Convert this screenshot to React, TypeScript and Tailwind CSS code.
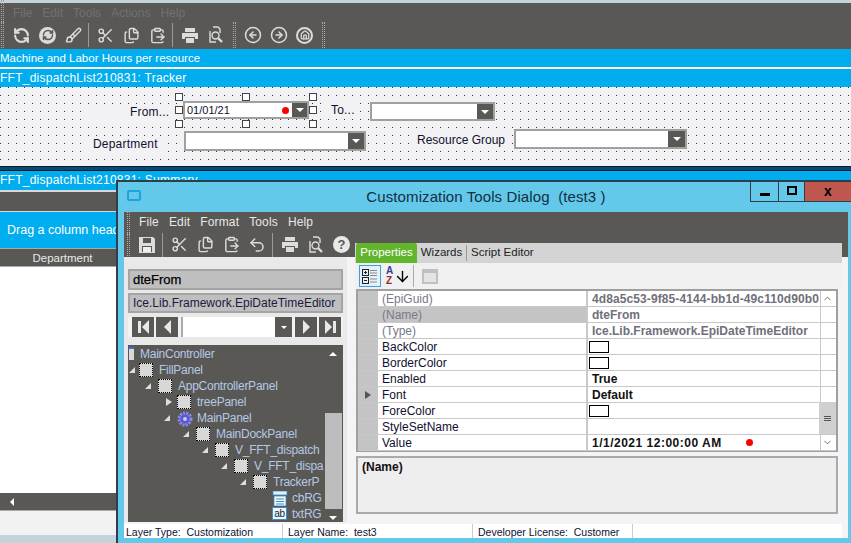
import {
  ArrowDown,
  Brush,
  ChevronDown,
  ChevronUp,
  CircleArrowLeft,
  CircleArrowRight,
  ClipboardPaste,
  Files,
  House,
  RefreshCcw,
  RefreshCw,
  Scissors,
  Undo2,
} from "lucide-react";

const sans = "font-['Liberation_Sans',Arial,sans-serif]";

function Grip() {
  return <div className="h-[26px] w-[3px] border-x border-dotted border-[#aaa]" />;
}

function Sep() {
  return <div className="h-[24px] w-px bg-[#9a9a98]" />;
}

function PrintIcon() {
  return (
    <svg width="18" height="17" viewBox="0 0 18 17" fill="#dcdcdc">
      <rect x="4" y="1" width="10" height="4" />
      <path d="M1 6h16v6h-3v-2H4v2H1z" />
      <rect x="5" y="11" width="8" height="5" />
    </svg>
  );
}

function PreviewIcon() {
  return (
    <svg width="17" height="18" viewBox="0 0 17 18" fill="none" stroke="#dcdcdc" strokeWidth="1.4">
      <path d="M6 1h5l2 2v4M3 5v11h6" />
      <circle cx="8.5" cy="9.5" r="3.5" />
      <path d="M11 12l4 4" strokeWidth="2.4" />
    </svg>
  );
}

function SaveIcon() {
  return (
    <svg width="18" height="18" viewBox="0 0 18 18" fill="#dcdcdc">
      <path d="M1 1h14l2 2v14H1z" />
      <rect x="5" y="2" width="8" height="5" fill="#595855" />
      <rect x="4" y="10" width="10" height="6" fill="#595855" />
      <rect x="5" y="11" width="8" height="5" fill="#efefef" />
    </svg>
  );
}

function CategorizedIcon() {
  return (
    <svg width="16" height="16" viewBox="0 0 16 16" fill="none" stroke="#222">
      <rect x="0.5" y="1.5" width="6" height="6" />
      <path d="M2 4.5h3M3.5 3v3" />
      <rect x="0.5" y="9.5" width="6" height="6" />
      <path d="M2 12.5h3" />
      <path d="M8 2.5h7M8 5h7M8 7.5h7M8 11h7M8 14h7" stroke="#8a8a8a" />
    </svg>
  );
}

function TriangleDown() {
  return <div className="h-0 w-0 border-x-[4px] border-t-[4px] border-x-transparent border-t-white" />;
}

function Combo({ className, button }: { className: string; button: string }) {
  return (
    <div className={`absolute flex justify-end border-2 border-[#a0a0a0] bg-white ${className}`}>
      <div className={`flex h-full items-center justify-center bg-[#595855] ${button}`}>
        <TriangleDown />
      </div>
    </div>
  );
}

function Handle({ className }: { className: string }) {
  return <div className={`absolute h-[8px] w-[8px] border border-[#444] bg-white ${className}`} />;
}

function Label({ className, children }: { className: string; children: string }) {
  return (
    <div className={`absolute whitespace-nowrap bg-[#f2f2f5] px-1 text-[12px] leading-[16px] text-[#101030] ${className}`}>
      {children}
    </div>
  );
}

const propRows = [
  { name: "(EpiGuid)", value: "4d8a5c53-9f85-4144-bb1d-49c110d90b0", dim: true, wide: "tracking-[0.1px]" },
  { name: "(Name)", value: "dteFrom", dim: true, selected: true },
  { name: "(Type)", value: "Ice.Lib.Framework.EpiDateTimeEditor", dim: true },
  { name: "BackColor", swatch: true },
  { name: "BorderColor", swatch: true },
  { name: "Enabled", value: "True" },
  { name: "Font", value: "Default", expand: true },
  { name: "ForeColor", swatch: true },
  { name: "StyleSetName", value: "" },
  { name: "Value", value: "1/1/2021 12:00:00 AM", dot: true, wide: "tracking-[0.5px]" },
];

const treeRows = [
  { label: "MainController", left: 1, text: 140, kind: "doc" },
  { label: "FillPanel", left: 139, text: 159, kind: "panel", arrow: 129 },
  { label: "AppControllerPanel", left: 158, text: 178, kind: "panel", arrow: 145 },
  { label: "treePanel", left: 177, text: 197, kind: "panel", arrow: 164, closed: true },
  { label: "MainPanel", left: 177, text: 197, kind: "gear", arrow: 164 },
  { label: "MainDockPanel", left: 196, text: 216, kind: "panel", arrow: 183 },
  { label: "V_FFT_dispatch", left: 215, text: 235, kind: "panel", arrow: 202 },
  { label: "V_FFT_dispa", left: 234, text: 254, kind: "panel", arrow: 221 },
  { label: "TrackerP", left: 253, text: 273, kind: "panel", arrow: 240 },
  { label: "cbRG", left: 272, text: 292, kind: "combo" },
  { label: "txtRG", left: 272, text: 292, kind: "ab" },
];

function TreeIcon({ kind }: { kind: string }) {
  if (kind === "panel") {
    return <div className="h-[14px] w-[14px] border border-dotted border-black bg-[#d8d8d8]" />;
  }
  if (kind === "gear") {
    return (
      <svg width="16" height="16" viewBox="0 0 16 16">
        <circle cx="8" cy="8" r="6" fill="#5a5ad0" stroke="#8a8ae8" strokeWidth="3" strokeDasharray="2 1.2" />
        <circle cx="8" cy="8" r="2" fill="#c8c8f0" />
      </svg>
    );
  }
  if (kind === "combo") {
    return (
      <svg width="16" height="15" viewBox="0 0 16 15">
        <rect x="1" y="0" width="14" height="4" fill="#dff1fb" stroke="#3b8fc4" strokeWidth="0.8" />
        <rect x="2" y="5" width="12" height="10" fill="#f4f8fb" stroke="#3b8fc4" strokeWidth="0.8" />
        <path d="M4 8h8M4 10.5h8M4 13h8" stroke="#3b8fc4" />
      </svg>
    );
  }
  if (kind === "ab") {
    return (
      <div className="flex h-[13px] w-[15px] items-center justify-center border border-[#3b8fc4] bg-[#eef6fb] text-[10px] leading-none text-[#123]">
        ab
      </div>
    );
  }
  return <div className="h-[13px] w-[5px] border-t-2 border-[#3c6ee0] bg-[#d8d8d8]" />;
}

function TreeRow({ row }: { row: (typeof treeRows)[number] }) {
  return (
    <div className="relative h-[16px] text-[12px] leading-[16px] tracking-[-0.25px] text-[#b4c8e6]">
      {row.arrow !== undefined &&
        (row.closed ? (
          <div
            className="absolute top-[4px] h-0 w-0 border-y-[4px] border-l-[6px] border-y-transparent border-l-[#ddd]"
            style={{ left: row.arrow - 128 + 2 }}
          />
        ) : (
          <div
            className="absolute top-[5px] h-0 w-0 border-b-[6px] border-l-[6px] border-b-[#ddd] border-l-transparent"
            style={{ left: row.arrow - 128 }}
          />
        ))}
      <div className="absolute top-px" style={{ left: row.kind === "doc" ? row.left : row.left - 128 }}>
        <TreeIcon kind={row.kind} />
      </div>
      <div className="absolute whitespace-nowrap" style={{ left: row.text - 128 }}>
        {row.label}
      </div>
    </div>
  );
}

function NavButton({ children }: { children: React.ReactNode }) {
  return <div className="flex h-[20px] w-[22px] items-center justify-center gap-px bg-[#595855]">{children}</div>;
}

function Bar() {
  return <div className="h-[12px] w-[3px] bg-[#e8e8e8]" />;
}

function Tri({ left }: { left?: boolean }) {
  return left ? (
    <div className="h-0 w-0 border-y-[7px] border-r-[7px] border-y-transparent border-r-[#e8e8e8]" />
  ) : (
    <div className="h-0 w-0 border-y-[7px] border-l-[7px] border-y-transparent border-l-[#e8e8e8]" />
  );
}

function PropertyGrid() {
  return (
    <div className="relative ml-px h-[163px] w-[482px] border-2 border-[#a0a0a0] bg-white text-[12px] leading-[17px]">
      {propRows.map((row) => (
        <div key={row.name} className="flex h-[16px] border-b border-[#c8c8c8]">
          <div className="flex w-[20px] shrink-0 items-center justify-center bg-[#c4c4c4]">
            {row.expand && (
              <div className="h-0 w-0 border-y-[4px] border-l-[6px] border-y-transparent border-l-[#555]" />
            )}
          </div>
          <div
            className={`w-[210px] shrink-0 border-r-2 border-[#c8c8c8] pl-1 ${row.selected ? "bg-[#c4c4c4]" : ""} ${
              row.dim ? "text-[#7a7a8a]" : "text-[#101030]"
            }`}
          >
            {row.name}
          </div>
          <div
            className={`relative w-[233px] shrink-0 overflow-hidden whitespace-nowrap border-r border-[#c8c8c8] pl-[4px] font-bold ${
              row.dim ? "text-[#70707a]" : "text-[#111]"
            } ${row.wide ?? ""}`}
          >
            {row.swatch && <div className="-ml-[3px] mt-[2px] h-[12px] w-[20px] border border-black bg-white" />}
            {row.value}
            {row.dot && <div className="absolute left-[158px] top-[4px] h-[7px] w-[7px] rounded-full bg-[#f00]" />}
          </div>
        </div>
      ))}
      <div className="absolute right-0 top-0 flex h-[159px] w-[17px] flex-col justify-between">
        <div className="flex h-[16px] items-center justify-center border-b border-[#c8c8c8] text-[#666]">
          <ChevronUp size={11} />
        </div>
        <div>
          <div className="flex h-[32px] flex-col items-center justify-center gap-px bg-[#d0d0d0]">
            <div className="h-px w-[7px] bg-[#555]" />
            <div className="h-px w-[7px] bg-[#555]" />
            <div className="h-px w-[7px] bg-[#555]" />
          </div>
          <div className="flex h-[16px] items-center justify-center text-[#666]">
            <ChevronDown size={11} />
          </div>
        </div>
      </div>
    </div>
  );
}

function Dialog() {
  return (
    <div className={`absolute left-[116px] top-[180px] h-[363px] w-[735px] border-l-2 border-t-2 border-[#2c3f4a] bg-[#63c8ea] ${sans}`}>
      <div className="relative flex h-[30px] items-center justify-center pl-[3px] text-[15px] tracking-[0.1px] text-[#10303f]">
        <div className="absolute left-[9px] top-[8px] h-[11px] w-[14px] rounded-[2px] border-2 border-[#1aa5dc] bg-[#63c8ea]" />
        <span className="whitespace-pre">Customization Tools Dialog  (test3 )</span>
        <div className="absolute right-0 top-0 flex h-[20px] border-b border-l border-[#2c3f4a]">
          <div className="flex w-[28px] items-end justify-center border-r border-[#2c3f4a] pb-[5px]">
            <div className="h-[3px] w-[10px] bg-black" />
          </div>
          <div className="flex w-[26px] items-center justify-center border-r border-[#2c3f4a] pb-[2px]">
            <div className="h-[9px] w-[10px] border-2 border-black" />
          </div>
          <div className="flex w-[46px] items-center justify-center bg-[#c0574f] pb-[2px] text-[14px] font-bold leading-none text-black">
            x
          </div>
        </div>
      </div>
      <div className="ml-[6px] w-[724px] bg-[#f4f4f6]">
        <div className="h-[45px] bg-[#595855] text-[#e8e8e8]">
          <div className="flex h-[20px] items-center pl-[3px] text-[12px] tracking-[0.15px]">
            <Grip />
            <div className="ml-[9px] flex gap-[10px]">
              <span>File</span>
              <span>Edit</span>
              <span>Format</span>
              <span>Tools</span>
              <span>Help</span>
            </div>
          </div>
          <div className="flex h-[25px] items-center pl-[3px] text-[#dcdcdc]">
            <Grip />
            <div className="ml-[8px]">
              <SaveIcon />
            </div>
            <div className="ml-[6px]">
              <Sep />
            </div>
            <Scissors size={17} className="ml-[8px]" />
            <Files size={17} className="ml-[9px]" />
            <ClipboardPaste size={17} className="ml-[9px]" />
            <Undo2 size={18} className="ml-[8px]" />
            <div className="ml-[6px]">
              <Sep />
            </div>
            <div className="ml-[8px]">
              <PrintIcon />
            </div>
            <div className="ml-[8px]">
              <PreviewIcon />
            </div>
            <div className="ml-[9px] flex h-[17px] w-[17px] items-center justify-center rounded-full bg-[#e8e8e8] text-[13px] font-bold text-[#595855]">
              ?
            </div>
          </div>
        </div>
        <div className="flex h-[267px]">
          <div className="h-[265px] w-[223px] rounded-tr-[3px] bg-[#e9e9e9] px-[4px] pt-[12px]">
            <div className="flex h-[21px] items-center border-2 border-[#a4a4a4] bg-[#bfbfbf] pl-[3px] text-[13px] text-black [-webkit-text-stroke:0.25px_black]">
              dteFrom
            </div>
            <div className="mt-[3px] flex h-[20px] items-center border-2 border-[#a4a4a4] bg-[#bfbfbf] pl-[3px] text-[12px] text-[#201a40]">
              Ice.Lib.Framework.EpiDateTimeEditor
            </div>
            <div className="mt-[4px] flex h-[20px] items-center bg-[#f2f2f2] pl-[4px]">
              <NavButton>
                <Bar />
                <Tri left />
              </NavButton>
              <div className="ml-[2px]">
                <NavButton>
                  <Tri left />
                </NavButton>
              </div>
              <div className="ml-[3px] flex h-[20px] w-[111px] justify-end border-l-2 border-[#aaa] bg-white">
                <div className="flex w-[17px] items-center justify-center bg-[#595855]">
                  <div className="h-0 w-0 border-x-[3px] border-t-[3px] border-x-transparent border-t-white" />
                </div>
              </div>
              <div className="ml-[3px]">
                <NavButton>
                  <Tri />
                </NavButton>
              </div>
              <div className="ml-[2px]">
                <NavButton>
                  <Tri />
                  <Bar />
                </NavButton>
              </div>
            </div>
            <div className="relative mt-[8px] h-[177px] overflow-hidden bg-[#595855] pt-[1px]">
              {treeRows.map((row) => (
                <TreeRow key={row.label} row={row} />
              ))}
              <div className="absolute right-px top-[68px] h-[96px] w-[17px] bg-[#bdbdbd]" />
              <div className="absolute right-[6px] top-[7px] h-0 w-0 border-x-[4px] border-b-[4px] border-x-transparent border-b-white" />
              <div className="absolute right-[6px] top-[171px] h-0 w-0 border-x-[4px] border-t-[4px] border-x-transparent border-t-white" />
            </div>
          </div>
          <div className="-mt-[14px] ml-[8px] h-[281px] w-[487px]">
            <div className="flex h-[20px] items-stretch bg-[#d4d4d4] text-[11.5px] text-[#222]">
              <div className="ml-px flex w-[61px] items-center justify-center rounded-t-[2px] bg-[#62b52c] text-white">
                Properties
              </div>
              <div className="flex w-[49px] items-center justify-center">Wizards</div>
              <div className="my-[2px] w-px bg-[#999]" />
              <div className="flex items-center pl-[4px]">Script Editor</div>
            </div>
            <div className="flex h-[26px] items-center bg-[#f0f0f0] pl-[4px]">
              <div className="flex h-[22px] w-[22px] items-center justify-center border border-[#3aa0dc] bg-[#e4f1fa]">
                <CategorizedIcon />
              </div>
              <div className="ml-[5px] flex w-[11px] flex-col text-[10px] font-bold leading-[10px]">
                <span className="text-[#3a3a9a]">A</span>
                <span className="text-[#9a2a2a]">Z</span>
              </div>
              <ArrowDown size={17} className="-ml-[3px] text-black" />
              <div className="ml-[2px] h-[22px] w-px bg-[#aaa]" />
              <div className="ml-[8px] h-[15px] w-[16px] border-2 border-t-4 border-[#c0c0c0] bg-[#e4e4e4]" />
            </div>
            <PropertyGrid />
            <div className="ml-px mt-[4px] h-[58px] w-[482px] border-2 border-[#aaa] bg-[#eeeeee] pl-[4px] pt-px text-[12px] font-bold leading-[16px] text-[#111]">
              (Name)
            </div>
          </div>
        </div>
        <div className="flex h-[14px] w-[718px] bg-white text-[10.5px] leading-[16px] text-[#101030]">
          <div className="w-[159px] whitespace-pre border-r border-[#ccc] pl-[2px]">Layer Type:  Customization</div>
          <div className="w-[190px] whitespace-pre border-r border-[#ccc] pl-[5px]">Layer Name:  test3</div>
          <div className="w-[160px] whitespace-pre border-r border-[#ccc] pl-[5px]">Developer License:  Customer</div>
        </div>
      </div>
    </div>
  );
}

export default function App() {
  return (
    <div className={`relative flex h-[543px] w-[851px] flex-col overflow-hidden bg-[#c5d3da] ${sans}`}>
      <div className="mt-[3px] h-[46px] shrink-0 bg-[#595855]">
        <div className="flex h-[20px] items-center pl-px">
          <Grip />
          <div className="ml-[9px] flex gap-[10px] text-[12px] text-[#72716e]">
            <span>File</span>
            <span>Edit</span>
            <span>Tools</span>
            <span>Actions</span>
            <span>Help</span>
          </div>
        </div>
        <div className="flex h-[24px] items-center pl-px text-[#dcdcdc]">
          <Grip />
          <RefreshCcw size={17} strokeWidth={3} className="ml-[9px]" />
          <div className="ml-[9px] flex h-[17px] w-[17px] items-center justify-center rounded-full bg-[#dcdcdc] text-[#595855]">
            <RefreshCw size={12} strokeWidth={3} />
          </div>
          <Brush size={17} className="ml-[9px]" />
          <div className="ml-[6px]">
            <Sep />
          </div>
          <Scissors size={17} className="ml-[8px]" />
          <Files size={17} className="ml-[9px]" />
          <ClipboardPaste size={17} className="ml-[9px]" />
          <div className="ml-[6px]">
            <Sep />
          </div>
          <div className="ml-[8px]">
            <PrintIcon />
          </div>
          <div className="ml-[8px]">
            <PreviewIcon />
          </div>
          <div className="ml-[9px]">
            <Grip />
          </div>
          <CircleArrowLeft size={18} className="ml-[8px]" />
          <CircleArrowRight size={18} className="ml-[8px]" />
          <div className="ml-[8px] flex h-[17px] w-[17px] items-center justify-center rounded-full border-2 border-[#dcdcdc]">
            <House size={10} strokeWidth={3} />
          </div>
          <div className="ml-[9px]">
            <Grip />
          </div>
        </div>
      </div>
      <div className="h-[18px] shrink-0 bg-[#00adef] text-[11.5px] leading-[18px] text-white">
        Machine and Labor Hours per resource
      </div>
      <div className="h-[2px] shrink-0 bg-white" />
      <div className="h-[18px] shrink-0 bg-[#00adef] text-[12px] leading-[18px] tracking-[0.25px] text-white">
        FFT_dispatchList210831: Tracker
      </div>
      <div className="relative h-[79px] shrink-0 bg-[#f2f2f5] bg-[radial-gradient(circle_at_0.5px_0.5px,#333_0.7px,transparent_0.8px)] bg-[length:8px_8px]">
        <Label className="left-[86px] top-[17px] w-[84px] pl-[44px] tracking-[0.2px]">From...</Label>
        <Label className="left-[327px] top-[15px] tracking-[0.2px]">To...</Label>
        <Label className="left-[86px] top-[49px] w-[76px] pl-[7px] tracking-[0.2px]">Department</Label>
        <Label className="left-[413px] top-[45px]">Resource Group</Label>
        <Handle className="left-[175px] top-[6px]" />
        <Handle className="left-[242px] top-[6px]" />
        <Handle className="left-[309px] top-[6px]" />
        <Handle className="left-[175px] top-[19px]" />
        <Handle className="left-[309px] top-[19px]" />
        <Handle className="left-[175px] top-[33px]" />
        <Handle className="left-[242px] top-[33px]" />
        <Handle className="left-[309px] top-[33px]" />
        <div className="absolute left-[183px] top-[14px] flex h-[18px] w-[126px] items-center justify-end border-2 border-[#a0a0a0] bg-white">
          <span className="absolute left-[2px] text-[11px] text-[#101030]">01/01/21</span>
          <div className="mr-[3px] h-[7px] w-[7px] rounded-full bg-[#f00]" />
          <div className="flex h-full w-[15px] items-center justify-center bg-[#595855]">
            <TriangleDown />
          </div>
        </div>
        <Combo className="left-[370px] top-[15px] h-[19px] w-[125px]" button="w-[16px]" />
        <Combo className="left-[184px] top-[44px] h-[20px] w-[182px]" button="w-[16px]" />
        <Combo className="left-[514px] top-[42px] h-[20px] w-[173px]" button="w-[17px]" />
      </div>
      <div className="h-[5px] shrink-0 border-y border-[#0a1c2a] bg-[#0a4a75]" />
      <div className="h-[19px] shrink-0 bg-[#00adef] text-[12px] leading-[18px] tracking-[0.25px] text-white">
        FFT_dispatchList210831: Summary
      </div>
      <div className="h-[2px] shrink-0 bg-[#d8d8d8]" />
      <div className="h-[19px] shrink-0 bg-[#595855]" />
      <div className="flex h-[37px] shrink-0 items-center border-t border-[#d8d8d8] bg-[#00adef] pl-[7px] text-[12.5px] text-white">
        <span className="whitespace-nowrap">Drag a column head</span>
      </div>
      <div className="h-[19px] w-[125px] shrink-0 border-y border-[#aaa] bg-[#595855] text-center text-[11.5px] leading-[18px] text-[#e8e8e8]">
        Department
      </div>
      <div className="h-[226px] shrink-0 bg-white" />
      <div className="flex h-[18px] shrink-0 items-center border-b border-[#aaa] bg-[#595855] pl-[4px]">
        <div className="ml-[6px] h-0 w-0 border-y-[4px] border-r-[4px] border-y-transparent border-r-white" />
      </div>
      <div className="h-[24px] shrink-0 bg-[#f2f2f2]" />
      <Dialog />
    </div>
  );
}
